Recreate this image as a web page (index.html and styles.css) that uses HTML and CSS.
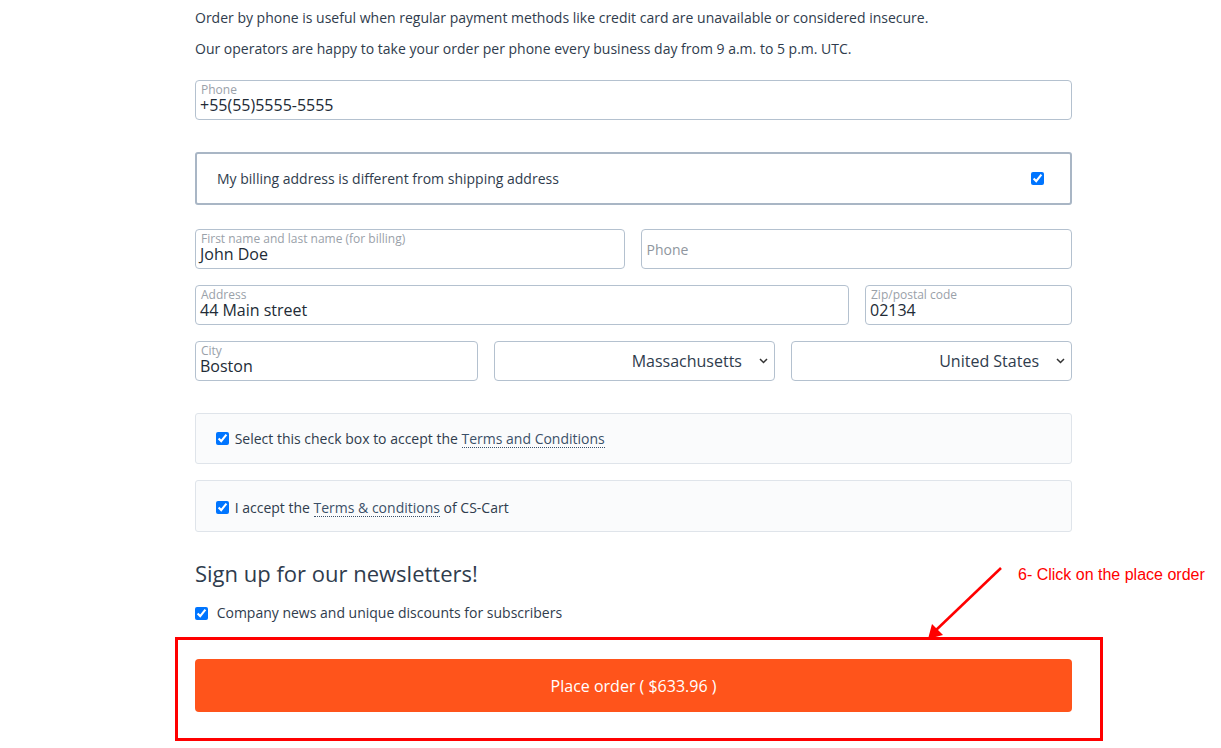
FILE: index.html
```html
<!DOCTYPE html>
<html lang="en">
<head>
  <meta charset="UTF-8" />
  <title>Checkout</title>
  <link rel="stylesheet" href="styles.css">
</head>
<body>

  <div class="checkout">

    <!-- intro -->
    <p class="note">Order by phone is useful when regular payment methods like credit card are unavailable or considered insecure.</p>
    <p class="note">Our operators are happy to take your order per phone every business day from 9 a.m. to 5 p.m. UTC.</p>

    <div class="field field-full">
      <span class="label">Phone</span>
      <span class="value">+55(55)5555-5555</span>
    </div>

    <!-- billing -->
    <div class="billing-box">
      <span>My billing address is different from shipping address</span>
      <input type="checkbox" checked>
    </div>

    <div class="row">
      <div class="field grow-2">
        <span class="label">First name and last name (for billing)</span>
        <span class="value">John Doe</span>
      </div>
      <div class="field grow-2 empty">
        <span class="placeholder">Phone</span>
      </div>
    </div>

    <div class="row">
      <div class="field address">
        <span class="label">Address</span>
        <span class="value">44 Main street</span>
      </div>
      <div class="field zip">
        <span class="label">Zip/postal code</span>
        <span class="value">02134</span>
      </div>
    </div>

    <div class="row">
      <div class="field grow-3">
        <span class="label">City</span>
        <span class="value">Boston</span>
      </div>
      <div class="field grow-3 select">
        <span>Massachusetts</span>
        <svg width="9" height="6" viewBox="0 0 9 6"><path d="M1 1l3.5 3.5 3.5-3.5" fill="none" stroke="#333" stroke-width="1.5"/></svg>
      </div>
      <div class="field grow-3 select">
        <span>United States</span>
        <svg width="9" height="6" viewBox="0 0 9 6"><path d="M1 1l3.5 3.5 3.5-3.5" fill="none" stroke="#333" stroke-width="1.5"/></svg>
      </div>
    </div>

    <!-- terms -->
    <div class="terms-box first">
      <label><input type="checkbox" checked> Select this check box to accept the <a href="#">Terms and Conditions</a></label>
    </div>
    <div class="terms-box second">
      <label><input type="checkbox" checked> I accept the <a href="#">Terms &amp; conditions</a> of CS-Cart</label>
    </div>

    <!-- newsletters -->
    <h3 class="news-title">Sign up for our newsletters!</h3>
    <label class="news-item"><input type="checkbox" checked> Company news and unique discounts for subscribers</label>

    <button class="place-order">Place order ( $633.96 )</button>
  </div>

  <!-- annotation -->
  <div class="mark-box"></div>
  <div class="mark-text">6- Click on the place order</div>
  <svg class="mark-arrow" width="90" height="90" viewBox="0 0 90 90">
    <line x1="81" y1="6" x2="14" y2="70" stroke="red" stroke-width="2.5"/>
    <path d="M8 77 L12 62 L23 73 Z" fill="red"/>
  </svg>

</body>
</html>
```

FILE: styles.css
```css
html {
  overflow: hidden;
}

body {
  margin: 0;
  padding: 0;
  min-height: 748px;
  font-family: 'Open Sans', 'Liberation Sans', sans-serif;
  font-size: 14px;
  color: #2f3c4d;
  background: white;
  position: relative;
}

.checkout {
  width: 877px;
  margin-left: 195px;
  padding-top: 8px;
}

.note {
  margin: 0 0 11px;
  line-height: 20px;
}

.field {
  box-sizing: border-box;
  height: 40px;
  border: 1px solid #b4c1cf;
  border-radius: 4px;
  padding: 2px 4px 0;
  display: flex;
  flex-direction: column;
  background: white;
}

.field-full {
  margin-top: 21px;
}

.label {
  font-size: 12px;
  line-height: 14px;
  color: #9aa1a9;
  padding-left: 1px;
}

.value {
  font-size: 16px;
  line-height: 17px;
  color: #222b36;
}

.field.empty {
  justify-content: center;
  padding: 0 5px;
}

.placeholder {
  color: #8f969e;
  font-size: 14px;
}

.billing-box {
  box-sizing: border-box;
  margin-top: 32px;
  height: 53px;
  border: 2px solid #a9b6c5;
  border-radius: 3px;
  display: flex;
  align-items: center;
  justify-content: space-between;
  padding: 0 26px 0 20px;
  color: #2f3c4d;
}

.billing-box input {
  margin: 0;
  width: 13px;
  height: 13px;
}

.row {
  display: flex;
  gap: 16px;
  margin-top: 16px;
}

.billing-box + .row {
  margin-top: 24px;
}

.grow-2 { flex: 1; }
.grow-3 { flex: 1; }
.address { flex: 0 0 654px; }
.zip { flex: 1; }

.field.select {
  flex-direction: row;
  align-items: center;
  justify-content: flex-end;
  gap: 17px;
  padding: 0 6px 0 0;
  font-size: 16px;
  color: #2f3c4d;
}

.terms-box {
  box-sizing: border-box;
  height: 52px;
  margin-top: 16px;
  background: #fafbfc;
  border: 1px solid #dfe4ea;
  border-radius: 3px;
  display: flex;
  align-items: center;
  padding-left: 20px;
}

.terms-box.first {
  margin-top: 32px;
  height: 51px;
}

.terms-box.second {
  padding-top: 3px;
}

.terms-box label,
.news-item {
  display: flex;
  align-items: center;
  white-space: pre;
}

.terms-box input,
.news-item input {
  width: 13px;
  height: 13px;
  margin: 0 2px 0 0;
}

.terms-box a {
  color: #3b5068;
  text-decoration: none;
  border-bottom: 1px dotted #3b5068;
  line-height: 17px;
}

.news-title {
  margin: 27px 0 0;
  font-size: 22px;
  font-weight: normal;
  line-height: 28px;
  color: #2f3c4d;
}

.news-item {
  margin-top: 16px;
  line-height: 20px;
}

.news-item input {
  margin-right: 5px;
}

.place-order {
  display: block;
  width: 100%;
  height: 53px;
  margin-top: 36px;
  background: #ff541b;
  border: none;
  border-radius: 4px;
  color: white;
  font-family: 'Open Sans', 'Liberation Sans', sans-serif;
  font-size: 16px;
  cursor: pointer;
}

/* annotation overlay */
.mark-box {
  position: absolute;
  left: 175px;
  top: 637px;
  width: 922px;
  height: 98px;
  border: 3px solid red;
}

.mark-text {
  position: absolute;
  left: 1018px;
  top: 566px;
  font-family: 'Liberation Sans', Arial, sans-serif;
  font-size: 16px;
  color: red;
}

.mark-arrow {
  position: absolute;
  left: 920px;
  top: 562px;
}
```
